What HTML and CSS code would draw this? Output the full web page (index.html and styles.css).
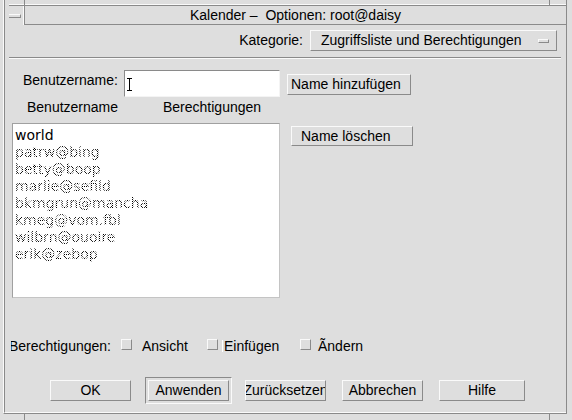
FILE: index.html
```html
<!DOCTYPE html>
<html lang="de">
<head>
<meta charset="utf-8">
<title>Kalender – Optionen</title>
<link rel="stylesheet" href="styles.css">
</head>
<body>
<div class="frame">
  <div class="frame-inner">
    <div class="titlebar">
      <div class="menubox"><span class="menubar"></span></div>
      <div class="title">Kalender –&nbsp; Optionen: root@daisy</div>
    </div>
    <div class="category">
      <span class="cat-label">Kategorie:</span>
      <div class="dropdown"><span>Zugriffsliste und Berechtigungen</span><span class="dd-ind"></span></div>
    </div>
    <div class="separator"></div>
    <div class="body">
      <div class="row-name">
        <span class="name-label">Benutzername:</span>
        <div class="field">
          <svg class="ibeam" width="5" height="13" viewBox="0 0 5 13"><path d="M0 0.5H5M2.5 0.5V12.5M0 12.5H5" stroke="#000" stroke-width="1" fill="none"/></svg>
        </div>
        <div class="btn btn-add">Name hinzufügen</div>
      </div>
      <div class="headers"><span class="h1">Benutzername</span><span>Berechtigungen</span></div>
      <div class="row-list">
        <div class="list">
          <div class="item">world</div>
          <div class="item dim">patrw@bing</div>
          <div class="item dim">betty@boop</div>
          <div class="item dim">marlie@sefild</div>
          <div class="item dim">bkmgrun@mancha</div>
          <div class="item dim">kmeg@vom.fbl</div>
          <div class="item dim">wilbrn@ouoire</div>
          <div class="item dim">erik@zebop</div>
        </div>
        <div class="btn btn-del">Name löschen</div>
      </div>
      <div class="perm-row">
        <div class="perm-label"><span>Berechtigungen:</span></div>
        <div class="opt opt1"><span class="cb"></span><span class="opt-text">Ansicht</span></div>
        <div class="opt opt2"><span class="cb"></span><span class="focus-bar"></span><span class="opt-text">Einfügen</span></div>
        <div class="opt opt3"><span class="cb"></span><span class="opt-text">Ãndern</span></div>
      </div>
      <div class="btn-row">
        <div class="btn bb">OK</div>
        <div class="default-ring"><div class="btn bb">Anwenden</div></div>
        <div class="btn bb b-reset">Zurücksetzen</div>
        <div class="btn bb b-cancel">Abbrechen</div>
        <div class="btn bb b-help">Hilfe</div>
      </div>
    </div>
  </div>
</div>
</body>
</html>
```

FILE: styles.css
```css
* { box-sizing: border-box; }

body {
  margin: 0;
  width: 572px;
  height: 420px;
  overflow: hidden;
  position: relative;
  background: #dedede;
  font-family: "Liberation Sans", Arial, sans-serif;
  font-size: 14px;
  color: #000;
}

/* window frame ticks */
body::before,
body::after,
.frame::before,
.frame::after {
  content: "";
  position: absolute;
  width: 1px;
  background: #8a8a8a;
}
body::before { left: 24px; top: 414px; height: 6px; }
body::after { left: 549px; top: 414px; height: 6px; }
.frame::before { left: 24px; top: 0; height: 5px; }
.frame::after { left: 549px; top: 0; height: 5px; }

.frame {
  margin-left: 3px;
  width: 564px;
  height: 414px;
  border-left: 1px solid #fafafa;
  border-right: 1px solid #8a8a8a;
  border-bottom: 1px solid #8a8a8a;
}

.frame-inner {
  height: 100%;
  padding-top: 5px;
  border-left: 1px solid #8a8a8a;
  border-bottom: 1px solid #fafafa;
}

.titlebar {
  display: flex;
  height: 20px;
  margin-left: 4px;
  border-top: 1px solid #8a8a8a;
  box-shadow: 0 -1px 0 #fafafa;
}

.menubox {
  width: 16px;
  border-right: 1px solid #8a8a8a;
  box-shadow: inset -1px 0 0 #fafafa;
}

.menubar {
  display: block;
  margin-top: 8px;
  width: 12px;
  height: 4px;
  border-top: 1px solid #fafafa;
  border-right: 1px solid #8a8a8a;
  border-bottom: 1px solid #8a8a8a;
}

.title {
  flex: 1;
  text-align: center;
  line-height: 18px;
  border-bottom: 1px solid #8a8a8a;
  white-space: pre;
}

.category {
  display: flex;
  justify-content: flex-end;
  align-items: flex-start;
  height: 32px;
  padding: 5px 9px 0 0;
}

.cat-label {
  margin-right: 7px;
  line-height: 21px;
}

.dropdown {
  width: 247px;
  height: 21px;
  display: flex;
  align-items: center;
  justify-content: space-between;
  padding: 0 7px 0 10px;
  line-height: 19px;
  border: 1px solid;
  border-color: #fafafa #8a8a8a #8a8a8a #fafafa;
}

.dd-ind {
  width: 11px;
  height: 4px;
  border: 1px solid;
  border-color: #fafafa #8a8a8a #8a8a8a #fafafa;
}

.separator {
  height: 2px;
  margin: 0 5px 0 4px;
  border-top: 1px solid #8a8a8a;
  border-bottom: 1px solid #fafafa;
}

.body {
  padding-left: 7px;
}

.btn {
  border: 1px solid;
  border-color: #fafafa #8a8a8a #8a8a8a #fafafa;
  white-space: nowrap;
  overflow: hidden;
  line-height: 19px;
}

.row-name {
  display: flex;
  align-items: flex-start;
  margin-top: 11px;
}

.name-label {
  width: 101px;
  margin: 2px 0 0 11px;
  line-height: 16px;
}

.field {
  width: 156px;
  height: 27px;
  padding: 7px 0 0 2px;
  background: #fff;
  border: 1px solid;
  border-color: #8a8a8a #f4f4f4 #f4f4f4 #8a8a8a;
}

.ibeam { display: block; }

.btn-add {
  width: 124px;
  height: 21px;
  margin: 4px 0 0 7px;
  padding-left: 3px;
}

.headers {
  display: flex;
  margin-top: 2px;
  line-height: 16px;
}

.h1 {
  width: 136px;
  margin-left: 15px;
}

.row-list {
  display: flex;
  align-items: flex-start;
  margin-top: 8px;
}

.list {
  width: 268px;
  height: 175px;
  padding: 3px 0 0 2px;
  background: #fff;
  border: 1px solid;
  border-color: #a0a0a0 #c4c4c4 #c4c4c4 #a0a0a0;
  font-family: "DejaVu Sans", sans-serif;
  font-size: 14px;
  line-height: 17px;
}

.item {
  width: max-content;
  white-space: nowrap;
}

.dim {
  color: transparent;
  background: repeating-conic-gradient(#000 0 25%, transparent 0 50%) 0 0 / 2px 2px;
  -webkit-background-clip: text;
  background-clip: text;
}

.btn-del {
  width: 122px;
  height: 20px;
  margin: 3px 0 0 11px;
  padding-left: 9px;
  line-height: 18px;
}

.perm-row {
  display: flex;
  align-items: flex-start;
  margin-top: 40px;
  line-height: 16px;
}

.perm-label {
  width: 109px;
  margin-left: -1px;
  overflow: hidden;
  white-space: nowrap;
}

.perm-label span {
  margin-left: -2px;
}

.opt {
  display: flex;
  align-items: flex-start;
}

.opt1 { width: 86px; margin-left: 1px; }
.opt2 { width: 93px; }

.cb {
  flex: none;
  width: 11px;
  height: 11px;
  margin-top: 1px;
  border: 1px solid;
  border-color: #fafafa #8a8a8a #8a8a8a #fafafa;
}

.opt1 .opt-text { margin-left: 10px; }
.opt2 .opt-text { margin-left: 1px; }
.opt3 .opt-text { margin-left: 7px; }

.focus-bar {
  width: 1px;
  height: 12px;
  margin: 2px 0 0 4px;
  background: #fff;
}

.btn-row {
  display: flex;
  align-items: center;
  margin-top: 23px;
  padding-left: 38px;
}

.bb {
  width: 81px;
  height: 21px;
  display: flex;
  justify-content: center;
}

.default-ring {
  margin-left: 14px;
  padding: 2px;
  border: 1px solid;
  border-color: #8a8a8a #fafafa #fafafa #8a8a8a;
}

.b-reset { margin-left: 13px; }
.b-cancel { margin-left: 16px; }
.b-help { margin-left: 16px; width: 86px; }
```
